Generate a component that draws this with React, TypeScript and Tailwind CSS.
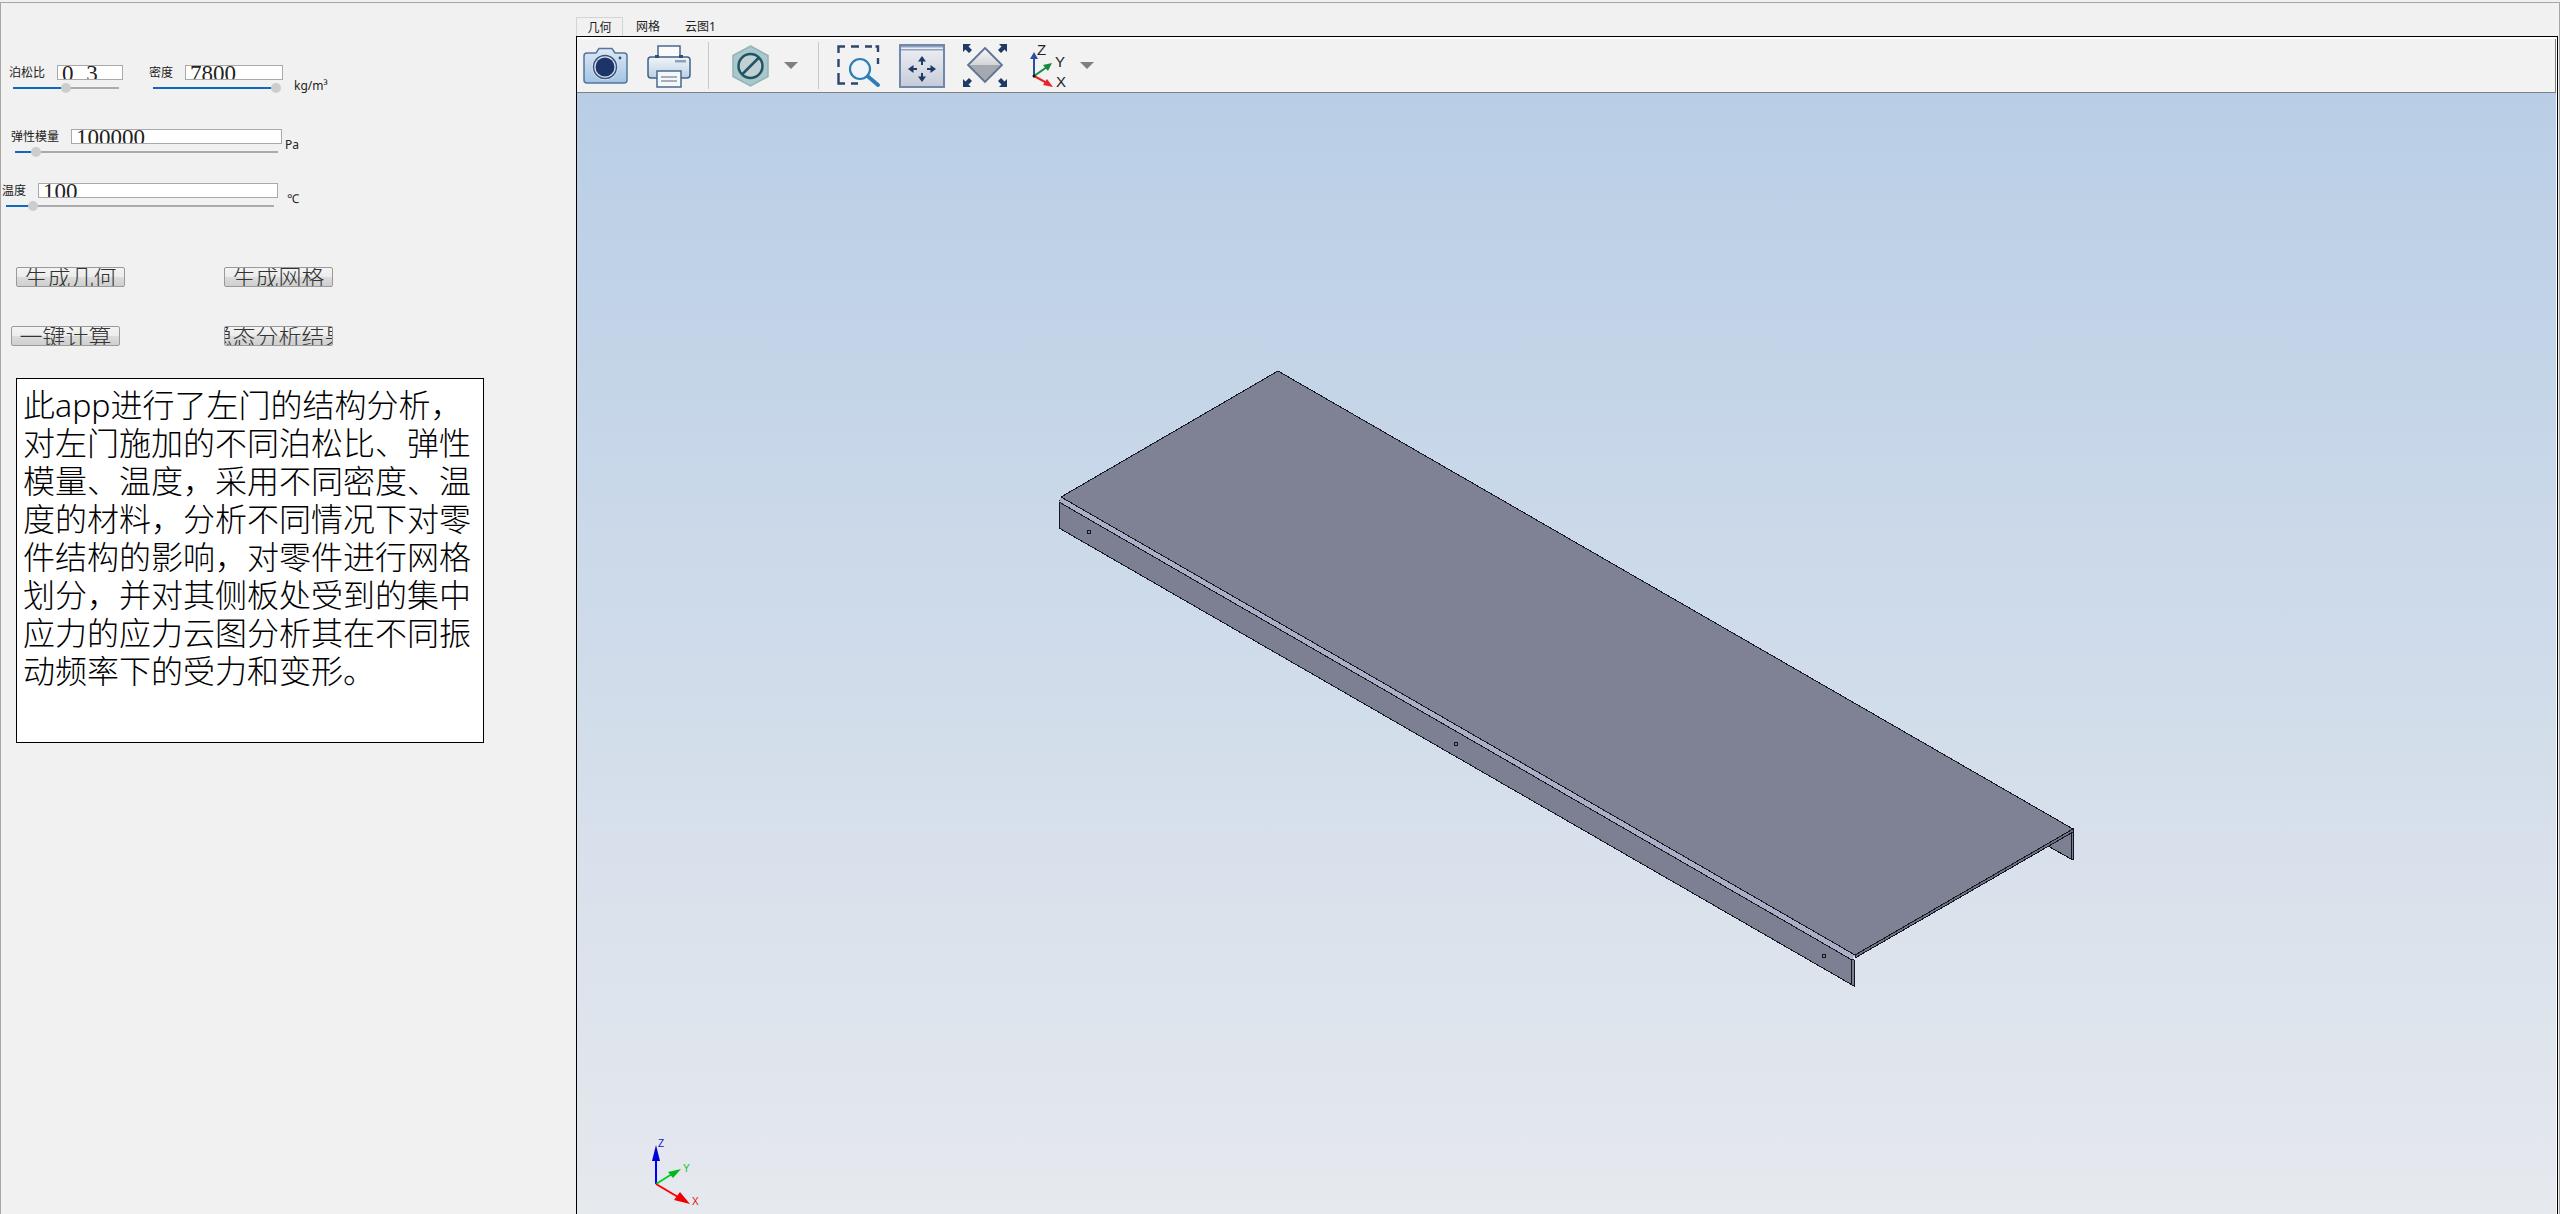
import React from "react";

const cjk = "font-['Noto_Sans','Noto_Sans_CJK_SC',sans-serif]";

function Slider({ className, pct }: { className: string; pct: number }) {
  return (
    <div className={`relative h-[10px] ${className}`}>
      <div className="absolute left-0 right-0 top-[4px] h-[2px] bg-[#ababab]" />
      <div className="absolute left-0 top-[4px] h-[2px] bg-[#0f68bd]" style={{ width: `${pct}%` }} />
      <div className="absolute top-0 h-[10px] w-[10px] -translate-x-1/2 rounded-full bg-[#cdcdcd]" style={{ left: `${pct}%` }} />
    </div>
  );
}

function Field({ className, children }: { className: string; children: React.ReactNode }) {
  return (
    <div className={`h-[15px] overflow-hidden border border-[#a9a9a9] bg-white pl-[4px] font-['Liberation_Serif',serif] text-[23px] leading-[23px] text-[#222] ${className}`}>
      <div className="-mt-[4px] whitespace-nowrap">{children}</div>
    </div>
  );
}

function Btn({ className, children }: { className: string; children: React.ReactNode }) {
  return (
    <div className={`flex h-[20px] w-[109px] items-center justify-center overflow-hidden whitespace-nowrap rounded-[2px] border border-[#9a9a9a] bg-[linear-gradient(#f3f3f3_0%,#ececec_50%,#dcdcdc_50%,#cfcfcf_100%)] text-[23px] font-light leading-[20px] text-[#333] ${className}`}>
      {children}
    </div>
  );
}

function Tri({ className }: { className: string }) {
  return (
    <svg className={`shrink-0 ${className}`} width="14" height="7" viewBox="0 0 14 7">
      <path d="M0 0H14L7 7Z" fill="#7f7f7f" />
    </svg>
  );
}

function Sep({ className }: { className: string }) {
  return <div className={`h-[47px] w-px shrink-0 bg-[#c8c8c8] ${className}`} />;
}

function Camera() {
  return (
    <svg className="ml-[6px] shrink-0" width="45" height="37" viewBox="0 0 45 37">
      <defs>
        <linearGradient id="cam" x1="0" y1="0" x2="0" y2="1">
          <stop offset="0" stopColor="#dde9f6" />
          <stop offset="1" stopColor="#a3c3e4" />
        </linearGradient>
      </defs>
      <path d="M4 6H13L16 1.5H29L32 6H41Q44 6 44 9V33Q44 36 41 36H4Q1 36 1 33V9Q1 6 4 6Z" fill="url(#cam)" stroke="#54759c" strokeWidth="1.5" />
      <circle cx="22" cy="20" r="13" fill="#dbe6f2" />
      <circle cx="22" cy="20" r="11.5" fill="none" stroke="#3c5482" strokeWidth="1.5" />
      <circle cx="22" cy="20" r="9.5" fill="#1c3468" />
      <circle cx="37" cy="11" r="1.4" fill="#34507c" />
    </svg>
  );
}

function Printer() {
  return (
    <svg className="ml-[19px] shrink-0" width="44" height="44" viewBox="0 0 44 44">
      <defs>
        <linearGradient id="pr" x1="0" y1="0" x2="0" y2="1">
          <stop offset="0" stopColor="#f1f5f9" />
          <stop offset="1" stopColor="#bcd0e4" />
        </linearGradient>
      </defs>
      <path d="M11 13V2H33V13" fill="#f8fafc" stroke="#47698f" strokeWidth="1.5" />
      <rect x="1" y="13" width="42" height="21" rx="3" fill="url(#pr)" stroke="#3f6189" strokeWidth="1.5" />
      <rect x="8" y="11" width="4" height="3" fill="#314f75" />
      <rect x="32" y="11" width="4" height="3" fill="#314f75" />
      <rect x="28" y="16" width="11" height="2.5" fill="#8ca0b6" />
      <rect x="10" y="27" width="24" height="16" fill="#f4f6f9" stroke="#47698f" strokeWidth="1.5" />
      <path d="M14 33H30M14 37H30" stroke="#8b97a6" strokeWidth="1.5" />
    </svg>
  );
}

function Hex() {
  return (
    <svg className="ml-[23px] shrink-0" width="37" height="42" viewBox="0 0 37 42">
      <path d="M18.5 1L36 10.5V31.5L18.5 41L1 31.5V10.5Z" fill="#aac7ca" stroke="#95b2b8" strokeWidth="1.5" />
      <circle cx="18.5" cy="21" r="12" fill="#c3cfd3" stroke="#1d5564" strokeWidth="2.5" />
      <path d="M10 29.5L27 12.5" stroke="#1d5564" strokeWidth="2.5" />
    </svg>
  );
}

function ZoomBox() {
  return (
    <svg className="ml-[18px] shrink-0" width="44" height="42" viewBox="0 0 44 42">
      <path d="M1.5 8V1.5H8M14 1.5H22M28 1.5H35M38.5 1.5H41V7M41 13V19M1.5 14V22M1.5 28V33M1.5 33V38.5H8M14 38.5H21" fill="none" stroke="#2c4670" strokeWidth="2.4" />
      <circle cx="23" cy="24" r="10" fill="#eef4fa" stroke="#2f7db8" strokeWidth="2.2" />
      <path d="M31 31.5L41 40" stroke="#2f7db8" strokeWidth="3.8" strokeLinecap="round" />
    </svg>
  );
}

function Pan() {
  const navy = "#1e3a66";
  return (
    <svg className="ml-[18px] shrink-0" width="46" height="44" viewBox="0 0 46 44">
      <defs>
        <linearGradient id="pan" x1="0" y1="0" x2="0" y2="1">
          <stop offset="0" stopColor="#eef0f4" />
          <stop offset="1" stopColor="#c6ccd8" />
        </linearGradient>
      </defs>
      <rect x="1" y="1" width="44" height="42" fill="url(#pan)" stroke="#6f88ac" strokeWidth="2" />
      <rect x="2" y="2" width="42" height="1.5" fill="#8fa3c0" />
      <rect x="2" y="5" width="42" height="1.5" fill="#8fa3c0" />
      <path d="M23 12L27 17.5H19Z M23 38L27 32.5H19Z M9 25L14.5 21V29Z M37 25L31.5 21V29Z" fill={navy} />
      <path d="M23 17V21M23 29V33M14 25H18M28 25H32" stroke={navy} strokeWidth="2" />
    </svg>
  );
}

function Fit() {
  const navy = "#1e3a66";
  return (
    <svg className="ml-[18px] shrink-0" width="44" height="43" viewBox="0 0 44 43">
      <defs>
        <linearGradient id="fit1" x1="0" y1="0" x2="0" y2="1">
          <stop offset="0" stopColor="#fafafa" />
          <stop offset="1" stopColor="#d2d4d8" />
        </linearGradient>
      </defs>
      <path d="M22 4L39 21H5Z" fill="url(#fit1)" />
      <path d="M22 38L39 21H5Z" fill="#a5a9b0" />
      <path d="M22 4L39 21L22 38L5 21Z" fill="none" stroke="#5f7592" strokeWidth="1.8" />
      <path d="M0 0H8L5.5 2.5L9 6L6 9L2.5 5.5L0 8Z M44 0V8L41.5 5.5L38 9L35 6L38.5 2.5L36 0Z M0 43V35L2.5 37.5L6 34L9 37L5.5 40.5L8 43Z M44 43H36L38.5 40.5L35 37L38 34L41.5 37.5L44 35Z" fill={navy} />
    </svg>
  );
}

function Triad() {
  return (
    <svg className="ml-[23px] shrink-0" width="36" height="44" viewBox="0 0 36 44">
      <path d="M4 32V14" stroke="#2a4f9e" strokeWidth="2" />
      <path d="M4 8L8 15H0Z" fill="#2a4f9e" />
      <path d="M4 32L17 23" stroke="#14893f" strokeWidth="2" />
      <path d="M22 19L18 27L13 21Z" fill="#14893f" />
      <path d="M4 32L17 39" stroke="#e8252a" strokeWidth="2" />
      <path d="M23 43L13 41L17 35Z" fill="#e8252a" />
      <circle cx="4" cy="32" r="1.5" fill="#111" />
      <text x="7" y="11" fontSize="15" fill="#222" fontFamily="Liberation Sans, sans-serif">Z</text>
      <text x="25" y="23" fontSize="15" fill="#222" fontFamily="Liberation Sans, sans-serif">Y</text>
      <text x="26" y="43" fontSize="15" fill="#222" fontFamily="Liberation Sans, sans-serif">X</text>
    </svg>
  );
}

function Model() {
  const ink = "#15171f";
  return (
    <svg className="block h-full w-full" shapeRendering="crispEdges">
      <g transform="translate(-577 -93)">
        <path d="M2048 846L2071 859H2073V829Z" fill="#7d8092" stroke={ink} />
        <path d="M2071 832V859" stroke={ink} />
        <path d="M1059 500L1854 960V986L1059 528Z" fill="#7d8092" stroke={ink} />
        <path d="M1851 959V985" stroke={ink} />
        <path d="M1855 955L2073 829V832L1855 958Z" fill="#6f7284" stroke={ink} />
        <path d="M1278 371L2073 829L1855 955L1061 497Z" fill="#7f8294" stroke={ink} />
        <path d="M1061 497L1855 955L1852 960L1059 502Z" fill="#a9afc9" />
        <path d="M1061 497L1855 955M1059 502L1852 960" stroke={ink} fill="none" />
        <circle cx="1089" cy="532" r="2" fill="#7d8092" stroke={ink} />
        <circle cx="1456" cy="744" r="2" fill="#7d8092" stroke={ink} />
        <circle cx="1824" cy="956" r="2" fill="#7d8092" stroke={ink} />
      </g>
      <g transform="translate(-577 -93)" shapeRendering="auto">
        <path d="M656 1184V1155" stroke="#0000ff" strokeWidth="2" />
        <path d="M656 1145L660 1161H652Z" fill="#0000d8" />
        <path d="M656 1184L672 1174" stroke="#00d020" strokeWidth="2" />
        <path d="M681 1169L673 1178L668 1172Z" fill="#00b818" />
        <path d="M656 1184L678 1197" stroke="#ff0000" strokeWidth="2" />
        <path d="M690 1204L674 1200L680 1192Z" fill="#f00000" />
        <text x="658" y="1147" fontSize="10" fill="#1010d0" fontFamily="Liberation Sans, sans-serif">Z</text>
        <text x="683" y="1172" fontSize="10" fill="#10c030" fontFamily="Liberation Sans, sans-serif">Y</text>
        <text x="692" y="1205" fontSize="10" fill="#e01010" fontFamily="Liberation Sans, sans-serif">X</text>
      </g>
    </svg>
  );
}

export default function App() {
  return (
    <div className={`h-[1214px] w-[2560px] overflow-hidden bg-[#f0f0f0] pt-[2px] ${cjk}`}>
      <div className="flex h-[1212px] border-x border-t border-[#a6a6a6] bg-[#f1f1f1]">
        <div className="w-[575px] shrink-0 pt-[62px] text-[12px] leading-[15px] text-[#222]">
          <div className="flex h-[28px] items-start pl-[8px]">
            <div className="w-[140px] shrink-0">
              <div className="flex items-center">
                <span className="w-[48px] shrink-0">泊松比</span>
                <Field className="w-[66px]">
                  <span className="mr-[7px]">0</span>
                  <span className="text-transparent">.</span>3
                </Field>
              </div>
              <Slider className="ml-[4px] mt-[3px] w-[106px]" pct={50} />
            </div>
            <div className="w-[145px] shrink-0">
              <div className="flex items-center">
                <span className="w-[36px] shrink-0">密度</span>
                <Field className="w-[98px]">7800</Field>
              </div>
              <Slider className="ml-[4px] mt-[3px] w-[128px]" pct={96} />
            </div>
            <span className="mt-[13px]">kg/m³</span>
          </div>

          <div className="mt-[36px] flex h-[28px] items-start pl-[10px]">
            <div className="w-[274px] shrink-0">
              <div className="flex items-center">
                <span className="w-[60px] shrink-0">弹性模量</span>
                <Field className="w-[211px]">100000</Field>
              </div>
              <Slider className="ml-[4px] mt-[3px] w-[263px]" pct={8} />
            </div>
            <span className="mt-[8px]">Pa</span>
          </div>

          <div className="mt-[26px] flex h-[28px] items-start pl-[1px]">
            <div className="w-[285px] shrink-0">
              <div className="flex items-center">
                <span className="w-[36px] shrink-0">温度</span>
                <Field className="w-[240px]">100</Field>
              </div>
              <Slider className="ml-[4px] mt-[3px] w-[268px]" pct={10} />
            </div>
            <span className="mt-[8px]">℃</span>
          </div>

          <div className="mt-[56px] flex pl-[15px]">
            <Btn className="">生成几何</Btn>
            <Btn className="ml-[99px]">生成网格</Btn>
          </div>
          <div className="mt-[39px] flex pl-[10px]">
            <Btn className="">一键计算</Btn>
            <Btn className="ml-[104px]">稳态分析结果</Btn>
          </div>

          <div className="ml-[15px] mt-[32px] h-[365px] w-[468px] border border-black bg-white px-[6px] pt-[7px] text-[32px] font-light leading-[38px] text-black">
            此app进行了左门的结构分析，对左门施加的不同泊松比、弹性模量、温度，采用不同密度、温度的材料，分析不同情况下对零件结构的影响，对零件进行网格划分，并对其侧板处受到的集中应力的应力云图分析其在不同振动频率下的受力和变形。
          </div>
        </div>

        <div className="flex min-w-0 flex-1 flex-col pr-[1px] pt-[14px]">
          <div className="flex h-[19px] items-stretch whitespace-nowrap text-[12px] leading-[20px] text-[#222]">
            <div className="w-[47px] border-x border-t border-[#d4d4d4] text-center">几何</div>
            <div className="ml-[13px]">网格</div>
            <div className="ml-[25px]">云图1</div>
          </div>
          <div className="flex min-h-0 flex-1 flex-col border-x border-t border-black">
            <div className="flex min-h-0 flex-1 flex-col border-r border-t-2 border-white">
              <div className="flex h-[54px] shrink-0 items-center border-b border-r border-[#808080] bg-[#f2f2f2]">
                <Camera />
                <Printer />
                <Sep className="ml-[17px]" />
                <Hex />
                <Tri className="ml-[15px]" />
                <Sep className="ml-[20px]" />
                <ZoomBox />
                <Pan />
                <Fit />
                <Triad />
                <Tri className="ml-[14px]" />
              </div>
              <div className="min-h-0 flex-1 bg-[linear-gradient(#b9cee6,#e6e9ee)]">
                <Model />
              </div>
            </div>
          </div>
        </div>
      </div>
    </div>
  );
}
